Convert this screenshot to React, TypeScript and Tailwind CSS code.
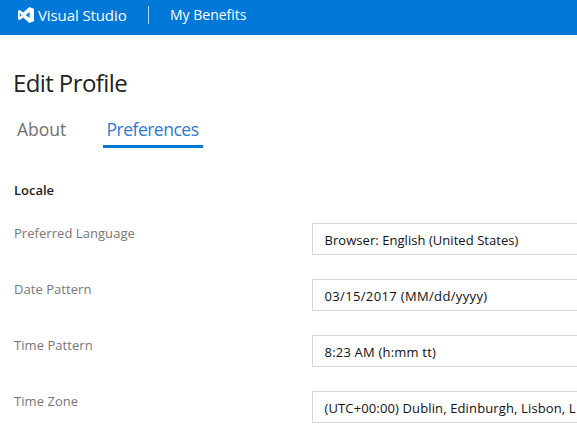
const rows = [
  { label: 'Preferred Language', value: 'Browser: English (United States)', tracking: 'tracking-[0.05px]' },
  { label: 'Date Pattern', value: '03/15/2017 (MM/dd/yyyy)', tracking: 'tracking-[0.35px]' },
  { label: 'Time Pattern', value: '8:23 AM (h:mm tt)', tracking: 'tracking-[0.2px]' },
  { label: 'Time Zone', value: '(UTC+00:00) Dublin, Edinburgh, Lisbon, L', tracking: 'tracking-[0.13px]' },
];

function Logo() {
  return (
    <svg className="mt-px mr-1 h-4 w-4" viewBox="0 0 16 16" fill="#fff" fillRule="evenodd">
      <path d="M11.3 0 16 1.8v12.4L11.3 16 5.2 10.4 1.8 13 0 12.2V3.8L1.8 3 5.2 5.6 11.3 0ZM11.6 5 7.8 8l3.8 3V5ZM1.8 6v4L3.7 8 1.8 6Z" />
    </svg>
  );
}

export default function App() {
  return (
    <div className="h-[446px] w-full overflow-hidden bg-white font-['Open_Sans',sans-serif] whitespace-nowrap">
      <header className="flex h-[35px] items-start bg-[#0078d7] pt-[6px] pl-[18px] text-white">
        <Logo />
        <span className="w-[110px] text-[15px] leading-[19px] tracking-[-0.1px]">Visual Studio</span>
        <span className="h-[18px] w-px bg-white/70" />
        <span className="ml-[21px] text-[14px] leading-[18px]">My Benefits</span>
      </header>
      <main className="pl-[14px]">
        <h1 className="-ml-px pt-[32px] text-[24px] leading-[32px] tracking-[-0.6px] text-[#222]">Edit Profile</h1>
        <nav className="mt-[18px] flex text-[17.5px] leading-[25px]">
          <span className="ml-[3px] w-[86px] text-[#707070]">About</span>
          <span className="h-[31px] w-[100px] border-b-3 border-[#0078d7] pl-[3.5px] tracking-[-0.5px] text-[#2f78d0]">Preferences</span>
        </nav>
        <h2 className="mt-[32px] text-[13px] leading-5 font-semibold text-[#222]">Locale</h2>
        <div className="mt-[23px] flex flex-col gap-6">
          {rows.map(({ label, value, tracking }) => (
            <div key={label} className="flex h-8">
              <span className="w-[298px] shrink-0 text-[13px] leading-5 tracking-[0.05px] text-[#777]">{label}</span>
              <span className={`h-8 flex-1 border border-r-0 border-[#d6d6d6] pl-[11.5px] text-[13px] leading-[32px] text-[#111] ${tracking}`}>{value}</span>
            </div>
          ))}
        </div>
      </main>
    </div>
  );
}
